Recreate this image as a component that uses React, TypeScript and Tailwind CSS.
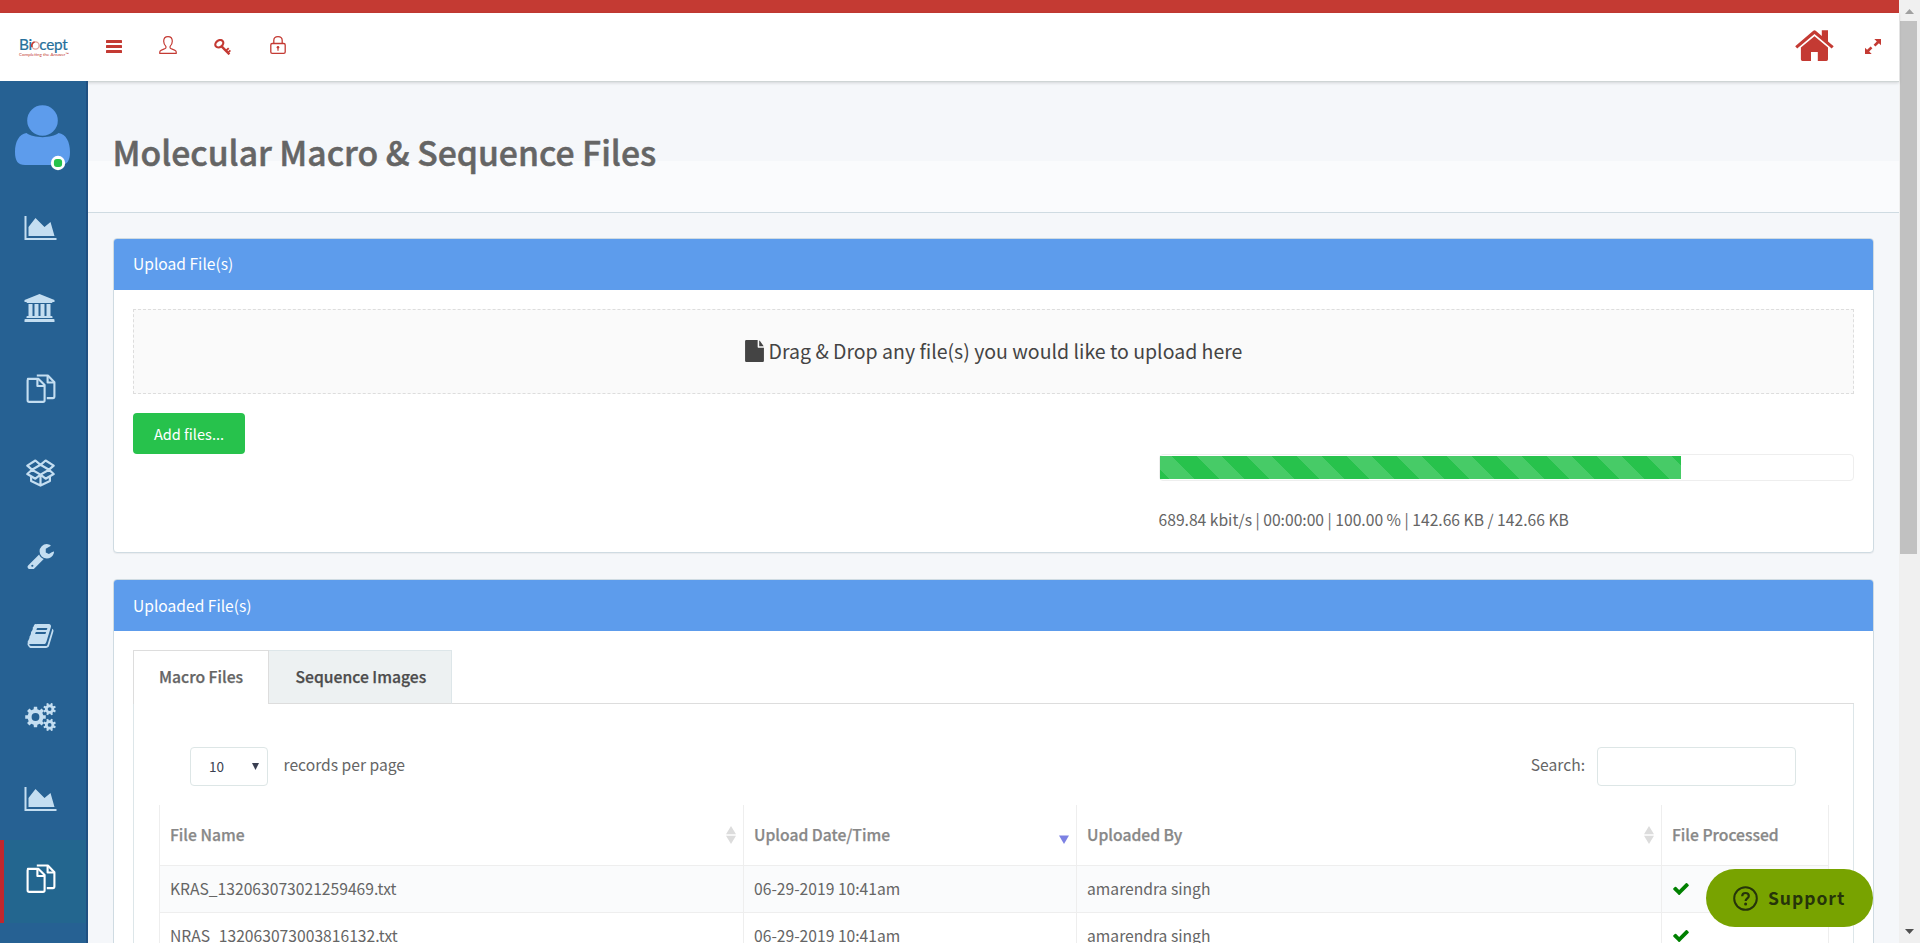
import React from "react";

type IconProps = { className?: string };

function gear(cx: number, cy: number, outer: number, inner: number, teeth: number, offset: number) {
  const pts: string[] = [];
  const step = (Math.PI * 2) / teeth;
  for (let i = 0; i < teeth; i++) {
    const a = offset + i * step;
    const corners: [number, number][] = [
      [inner, -0.3],
      [outer, -0.2],
      [outer, 0.2],
      [inner, 0.3],
    ];
    corners.forEach(([r, t]) => {
      pts.push(`${(cx + r * Math.cos(a + t * step)).toFixed(2)} ${(cy + r * Math.sin(a + t * step)).toFixed(2)}`);
    });
  }
  return `M${pts.join("L")}Z`;
}

function ring(cx: number, cy: number, r: number) {
  return `M${cx - r} ${cy}a${r} ${r} 0 1 0 ${r * 2} 0a${r} ${r} 0 1 0 ${-r * 2} 0Z`;
}

const AreaChart = ({ className }: IconProps) => (
  <svg viewBox="0 128 2048 1536" fill="currentColor" className={`h-6 w-[33px] ${className ?? ""}`}>
    <path d="M2048 1536v128h-2048v-1536h128v1408h1920zM1664 512l256 896h-1664v-576l448-576 576 576z" />
  </svg>
);

const University = () => (
  <svg viewBox="0 0 1920 1792" fill="currentColor" className="-mt-[2px] h-[28px] w-[31px]">
    <path d="M960 0l960 384v128h-128q0 26-20.500 45t-48.500 19h-1526q-28 0-48.500-19t-20.500-45h-128v-128zM256 640h256v768h128v-768h256v768h128v-768h256v768h128v-768h256v768h59q28 0 48.500 19t20.500 45v64h-1664v-64q0-26 20.500-45t48.500-19h59v-768zM1851 1600q28 0 48.500 19t20.500 45v128h-1920v-128q0-26 20.500-45t48.500-19h1782z" />
  </svg>
);

const Copy = () => (
  <svg viewBox="0 0 30 29" fill="none" stroke="currentColor" strokeWidth="2.100" strokeLinejoin="round" className="-mt-[4px] h-[29px] w-[30px]">
    <path d="M1.9 4.9H12.5L18.6 11V26.2Q18.6 27.9 17 27.9H3.2Q1.6 27.9 1.6 26.2V6.2Q1.6 4.9 3 4.9Z" />
    <path d="M11.400 5V12H18.400" />
    <path d="M10.8 1.5H21.9L28.4 8.2V22.6Q28.4 24.1 26.9 24.1H20.8" />
    <path d="M21.600 1.700V8.500H28.200" />
  </svg>
);

const OpenBox = () => (
  <svg viewBox="0 0 29 28" fill="none" stroke="currentColor" strokeWidth="2.200" strokeLinejoin="round" className="h-[28px] w-[29px]">
    <path d="M14.5 5.8L9.4 1.5L1.3 6.6L6 10.7L14.5 5.8L19.6 1.5L27.7 6.6L23 10.7Z" />
    <path d="M6 10.7L1.3 15L9.4 19.7L14.5 15.6L6 10.7ZM23 10.7L27.7 15L19.6 19.7L14.5 15.6Z" />
    <path d="M5.1 17.6V22L14.5 26.6L23.9 22V17.6M14.5 15.6V26.6" />
  </svg>
);

const Wrench = () => (
  <svg viewBox="54 64 1672 1600" fill="currentColor" className="h-[26px] w-[27px]">
    <path d="M448 1472q0-26-19-45t-45-19-45 19-19 45 19 45 45 19 45-19 19-45zm644-420l-682 682q-37 37-90 37-52 0-91-37l-106-108q-38-36-38-90 0-53 38-91l681-681q39 98 114.500 173.500t173.500 114.500zm634-435q0 39-23 106-47 134-164.500 217.500t-258.500 83.500q-185 0-316.500-131.500t-131.500-316.500 131.500-316.500 316.500-131.500q58 0 121.500 16.500t107.500 46.500q16 11 16 28t-16 28l-293 169v224l193 107q5-3 79-48.500t135.500-81 70.500-35.500q15 0 23.500 10t8.500 25z" />
  </svg>
);

const Book = () => (
  <svg viewBox="64 128 1664 1536" fill="currentColor" className="h-6 w-[27px]">
    <path d="M1703 478q40 57 18 129l-275 906q-19 64-76.500 107.500t-122.500 43.500h-923q-77 0-148.500-53.500t-99.500-131.500q-24-67-2-127 0-4 3-27t4-37q1-8-3-21.500t-3-19.500q2-11 8-21t16.500-23.500 16.500-23.500q23-38 45-91.500t30-91.500q3-10 .5-30t-.5-28q3-11 17-28t17-23q21-36 42-92t25-90q1-9-2.500-32t.5-28q4-13 22-30.500t22-22.500q19-26 42.500-84.500t27.500-96.500q1-8-3-25.500t-2-26.500q2-8 9-18t18-23 17-21q8-12 16.500-30.500t15-35 16-36 19.500-32 26.500-23.500 36-11.500 47.500 5.500l-1 3q38-9 51-9h761q74 0 114 56t18 130l-274 906q-36 119-71.500 153.500t-128.500 34.500h-869q-27 0-38 15-11 16-1 43 24 70 144 70h923q29 0 56-15.500t35-41.500l300-987q7-22 5-57 38 15 59 43zm-1064 2q-4 13 2 22.500t20 9.500h608q13 0 25.500-9.500t16.500-22.500l21-64q4-13-2-22.500t-20-9.500h-608q-13 0-25.500 9.500t-16.500 22.500zm-83 256q-4 13 2 22.500t20 9.500h608q13 0 25.500-9.500t16.500-22.500l21-64q4-13-2-22.500t-20-9.500h-608q-13 0-25.500 9.500t-16.500 22.500z" />
  </svg>
);

const Cogs = () => (
  <svg viewBox="0 0 31 28" fill="currentColor" fillRule="evenodd" className="h-[28px] w-[31px]">
    <path d={gear(10.5, 14, 10.4, 8, 8, 0) + ring(10.5, 14, 3.9)} />
    <path d={gear(24.6, 6.1, 6.4, 4.7, 8, 0.39) + ring(24.6, 6.1, 1.9)} />
    <path d={gear(24.6, 21.9, 6.4, 4.7, 8, 0.39) + ring(24.6, 21.9, 1.9)} />
  </svg>
);

const Check = () => (
  <svg viewBox="121 334 1550 1188" fill="#008000" className="ml-px h-[12px] w-4">
    <path d="M1671 566q0 40-28 68l-724 724-136 136q-28 28-68 28t-68-28l-136-136-362-362q-28-28-28-68t28-68l136-136q28-28 68-28t68 28l294 295 656-657q28-28 68-28t68 28l136 136q28 28 28 68z" />
  </svg>
);

const SortBoth = () => (
  <svg viewBox="0 0 10 18" fill="#dcdcdc" className="h-[18px] w-[10px]">
    <path d="M5 0L10 8.300H0ZM0 9.700H10L5 18Z" />
  </svg>
);

const SortDown = () => (
  <svg viewBox="0 0 10 18" fill="#7c81e3" className="h-[18px] w-[10px]">
    <path d="M0 9.500H10L5 18Z" />
  </svg>
);

const navItems = [
  { key: "charts", icon: <AreaChart />, pad: "pl-6" },
  { key: "institutions", icon: <University />, pad: "pl-6" },
  { key: "documents", icon: <Copy />, pad: "pl-[25.5px]" },
  { key: "inventory", icon: <OpenBox />, pad: "pl-[26px]" },
  { key: "tools", icon: <Wrench />, pad: "pl-[27px] pt-[3px]" },
  { key: "library", icon: <Book />, pad: "pl-[27px] pt-px" },
  { key: "settings", icon: <Cogs />, pad: "pl-[25px]" },
  { key: "reports", icon: <AreaChart />, pad: "pl-6" },
];

function TopBar() {
  return (
    <header className="relative z-10 flex h-[69px] shrink-0 border-b border-[#cfd5d5] bg-white text-[#c43a33] shadow-[0_1px_3px_rgba(0,0,0,0.14)]">
      <div className="flex w-[88px] flex-col items-start pt-[22px] pl-[19px]">
        <div className="flex h-[18px] items-center font-['Lato'] text-[15.3px] leading-[18px] tracking-[-0.3px] text-[#26709b] [-webkit-text-stroke:0.2px]">
          Bi
          <svg viewBox="0 0 10 10" className="-mr-[0.5px] -ml-px mt-[3px] h-[9px] w-[9px]" fill="none">
            <circle cx="5" cy="5" r="4" stroke="#e0a09c" strokeWidth="1.400" />
            <path d="M1.200 6.600A4 4 0 0 1 4 1.200" stroke="#c43a33" strokeWidth="1.800" />
          </svg>
          cept
        </div>
        <div className="-mt-px font-['Lato'] text-[4.5px] leading-[6px] whitespace-nowrap text-[#c43a33]">Completing the Answer™</div>
      </div>
      <div className="flex flex-1 items-start">
        <svg viewBox="0 0 16 13" fill="currentColor" className="mt-[27px] ml-[18px] h-[13px] w-4">
          <rect width="16" height="3" rx="0.600" />
          <rect y="5" width="16" height="3" rx="0.600" />
          <rect y="10" width="16" height="3" rx="0.600" />
        </svg>
        <svg viewBox="0 0 18 18" fill="none" stroke="currentColor" strokeWidth="1.200" className="mt-[23px] ml-[37px] h-[18px] w-[18px]" strokeLinejoin="round">
          <path d="M9 .7C6.200 .7 4.700 2.700 4.700 5.300C4.700 7.500 5.700 9.300 6.900 10.400V12C6.900 12.800 1.900 13.500 1.100 15.100C.8 15.800 .7 16.600 .7 17.300H17.300C17.300 16.600 17.200 15.800 16.900 15.100C16.100 13.500 11.100 12.800 11.100 12V10.400C12.300 9.300 13.300 7.500 13.300 5.300C13.300 2.700 11.800 .7 9 .7Z" />
        </svg>
        <svg viewBox="0 0 17 16" fill="none" stroke="currentColor" className="mt-[26px] ml-[37px] h-4 w-[17px]">
          <ellipse cx="5.300" cy="4.700" rx="4.300" ry="3.300" strokeWidth="2.200" transform="rotate(-38 5.300 4.700)" />
          <path d="M7.600 7.400L15.400 15.300" strokeWidth="2.400" />
          <path d="M12.300 11.500L14.700 9.100M14.300 13.300L16.400 11.300" strokeWidth="1.800" />
        </svg>
        <svg viewBox="0 0 16 18" fill="none" stroke="currentColor" strokeWidth="1.300" className="mt-[23px] ml-[39px] h-[18px] w-4">
          <rect x=".8" y="7.500" width="14.400" height="9.800" rx="1.400" />
          <path d="M3.800 7.400V4.600C3.800 2.200 5.500 .7 8 .7C10.500 .7 12.200 2.200 12.200 4.600V7.400" />
          <circle cx="8" cy="11.300" r="1.300" fill="currentColor" stroke="none" />
          <path d="M8 11.500V14.800" strokeWidth="1.200" />
        </svg>
      </div>
      <svg viewBox="0 0 39 31" fill="currentColor" className="mt-[17px] h-[31px] w-[39px]">
        <path d="M26.800 .3H33V11.600L38.700 16.300L36.700 18.500L19.500 3.900L2.200 18.500L.2 16.300L18.300 .7Q19.500 -.2 20.700 .7L26.800 5.900Z" />
        <path d="M19.500 6.300L33 17.600V29.300Q33 31 31.400 31H22.800V22H16V31H7.400Q5.900 31 5.900 29.300V17.600Z" />
      </svg>
      <svg viewBox="0 0 16 15" fill="currentColor" className="mt-[26px] mr-[18px] ml-[31px] h-[15px] w-4">
        <path d="M9.300 0H16V6.300L13.900 4.300L10.400 7.500L8.600 5.700L11.800 2.400Z" />
        <path d="M6.700 15H0V8.700L2.100 10.700L5.600 7.500L7.400 9.300L4.200 12.600Z" />
      </svg>
    </header>
  );
}

function Sidebar() {
  return (
    <aside className="relative z-20 flex w-[88px] shrink-0 flex-col border-r-2 border-[#205081] bg-[#266193] text-[#c4def1]">
      <div className="h-[106px] shrink-0 pt-[24px] pl-[15px]">
        <svg viewBox="0 0 56 66" className="h-[66px] w-[56px]">
          <circle cx="27.500" cy="15.500" r="15.300" fill="#5d9cec" />
          <path d="M11.500 28C18 33.500 37 33.500 43.500 28C51 29 55 37 55 47C55 56 52 60 45 60H10C3 60 0 56 0 47C0 37 4 29 11.500 28Z" fill="#5d9cec" />
          <circle cx="43" cy="58" r="7.200" fill="#fff" />
          <rect x="38.900" y="53.900" width="8.200" height="8.200" rx="3" fill="#27c24c" />
        </svg>
      </div>
      <nav className="flex flex-col">
        {navItems.map((item) => (
          <div key={item.key} className={`flex h-[81.6px] items-center ${item.pad}`}>
            {item.icon}
          </div>
        ))}
        <div className="flex h-[83px] items-center border-l-4 border-[#c1272d] bg-[#23668f] pb-[2px] pl-[21.5px] text-white">
          <Copy />
        </div>
      </nav>
    </aside>
  );
}

function UploadPanel() {
  return (
    <section className="h-[315px] overflow-hidden rounded-[4px] border border-[#cfdbe2] bg-white shadow-[0_1px_1px_rgba(0,0,0,0.05)]">
      <h2 className="h-[51px] bg-[#5d9cec] pl-[19px] text-[15.6px] leading-[49px] text-white">Upload File(s)</h2>
      <div className="px-[19px] pt-[19px]">
        <div className="flex h-[85px] items-center justify-center border border-dashed border-[#dddddd] bg-[#fafafa] pb-[2px] text-[#444]">
          <svg viewBox="0 0 1536 1792" fill="currentColor" className="mr-[5px] h-[22px] w-[19px]">
            <path d="M1024 0H96Q0 0 0 96V1696Q0 1792 96 1792H1440Q1536 1792 1536 1696V640H1120Q1024 640 1024 544ZM1152 40V512H1508Q1490 470 1460 436L1230 100Q1190 60 1152 40Z" />
          </svg>
          <span className="text-[19.5px] leading-6">Drag &amp; Drop any file(s) you would like to upload here</span>
        </div>
        <button className="mt-[19px] block h-[41px] w-[112px] rounded-[4px] bg-[#27c24c] text-[14.6px] leading-[41px] text-white">Add files...</button>
        <div className="ml-auto w-[695px]">
          <div className="flex h-[27px] rounded-[4px] border border-[#eeeeee] py-px">
            <div className="h-[23px] w-[521px] bg-[#27c24c] bg-[linear-gradient(45deg,rgba(255,255,255,0.15)_25%,transparent_25%,transparent_50%,rgba(255,255,255,0.15)_50%,rgba(255,255,255,0.15)_75%,transparent_75%,transparent)] bg-[length:50px_50px] bg-[position:0px_13px]" />
          </div>
          <p className="mt-[26px] -ml-[0.5px] text-[15.67px] leading-[26px] whitespace-nowrap">689.84 kbit/s | 00:00:00 | 100.00 % | 142.66 KB / 142.66 KB</p>
        </div>
      </div>
    </section>
  );
}

const rows = [
  { file: "KRAS_132063073021259469.txt", date: "06-29-2019 10:41am", user: "amarendra singh" },
  { file: "NRAS_132063073003816132.txt", date: "06-29-2019 10:41am", user: "amarendra singh" },
];

function FilesTable() {
  const th = "relative h-[60px] border-x border-[#eeeeee] p-0 pl-[10px] text-left font-medium [-webkit-text-stroke:0.25px]";
  const td = "border border-[#eeeeee] p-0 pl-[10px]";
  return (
    <table className="mt-[19px] ml-[25px] w-[1669px] table-fixed border-collapse text-[15.67px]">
      <colgroup>
        <col className="w-[584px]" />
        <col className="w-[333px]" />
        <col className="w-[585px]" />
        <col className="w-[167px]" />
      </colgroup>
      <thead className="text-[#888888]">
        <tr>
          <th className={th}>
            <div className="flex items-center justify-between pr-[7px]">File Name<SortBoth /></div>
          </th>
          <th className={th}>
            <div className="flex items-center justify-between pr-[7px]">Upload Date/Time<SortDown /></div>
          </th>
          <th className={th}>
            <div className="flex items-center justify-between pr-[7px]">Uploaded By<SortBoth /></div>
          </th>
          <th className={th}>File Processed</th>
        </tr>
      </thead>
      <tbody>
        {rows.map((r) => (
          <tr key={r.file} className="h-[47px] odd:bg-[#fafbfc]">
            <td className={td}>{r.file}</td>
            <td className={td}>{r.date}</td>
            <td className={td}>{r.user}</td>
            <td className={td}><Check /></td>
          </tr>
        ))}
      </tbody>
    </table>
  );
}

function FilesPanel() {
  return (
    <section className="mt-[26px] h-[420px] shrink-0 rounded-[4px] border border-[#cfdbe2] bg-white">
      <h2 className="h-[51px] rounded-t-[3px] bg-[#5d9cec] pl-[19px] text-[15.6px] leading-[51px] text-white">Uploaded File(s)</h2>
      <div className="px-[19px] pt-[19px]">
        <div className="flex h-[54px] text-[15.7px] leading-[52px] font-medium [-webkit-text-stroke:0.25px]">
          <div className="w-[136px] border-t border-r border-l border-[#dddddd] pl-[25px]">Macro Files</div>
          <div className="w-[183px] border-t border-r border-b border-[#dde6e9] border-b-[#dddddd] bg-[#edf1f2] pl-[26.5px] text-[#4c4c4c]">Sequence Images</div>
          <div className="flex-1 border-b border-[#dddddd]" />
        </div>
        <div className="h-[300px] border-x border-[#dde6e9]">
          <div className="flex items-start pt-[43px] pr-[57px] pl-[56px] text-[15.65px] leading-[35px]">
            <div className="flex h-[39px] w-[78px] items-center justify-between rounded-[4px] border border-[#dde6e6] pr-[8px] pl-[18px] text-[13.5px] leading-none text-[#3a3f51]">
              <span className="pt-px">10</span>
              <svg viewBox="0 0 7 7" fill="#3a3f51" className="h-[7px] w-[7px]">
                <path d="M0 0H7L3.500 7Z" />
              </svg>
            </div>
            <span className="ml-[15.5px]">records per page</span>
            <span className="mr-[12px] ml-auto">Search:</span>
            <div className="h-[39px] w-[199px] rounded-[4px] border border-[#dde6e6]" />
          </div>
          <FilesTable />
        </div>
      </div>
    </section>
  );
}

function ScrollBar() {
  return (
    <div className="flex w-[21px] shrink-0 flex-col items-center bg-[#f0f0f0]">
      <svg viewBox="0 0 9 5" fill="#a0a0a0" className="mt-[9px] h-[5px] w-[9px]">
        <path d="M0 5L4.500 0L9 5Z" />
      </svg>
      <div className="mt-[7px] mr-[2px] h-[533px] w-[17px] bg-[#c1c1c1]" />
      <svg viewBox="0 0 9 5" fill="#505050" className="mt-auto mb-[9px] h-[5px] w-[9px]">
        <path d="M0 0L4.500 5L9 0Z" />
      </svg>
    </div>
  );
}

export default function App() {
  return (
    <div className="relative flex h-[943px] w-[1920px] overflow-hidden font-['Noto_Sans_CJK_SC','Noto_Sans',sans-serif] text-[#656565]">
      <div className="flex min-w-0 flex-1 flex-col">
        <div className="h-[13px] shrink-0 bg-[#c43a33]" />
        <TopBar />
        <div className="-mt-px flex min-h-0 flex-1">
          <Sidebar />
          <main className="flex min-w-0 flex-1 flex-col bg-[#f5f7fa]">
            <div className="h-[132px] shrink-0 border-b border-[#cfdbe2] bg-[linear-gradient(#f5f7fa_80px,#fafbfd_80px)] pt-[47px] pl-[24.5px]">
              <h1 className="text-[33.7px] leading-[48px] font-medium [-webkit-text-stroke:0.5px]">Molecular Macro &amp; Sequence Files</h1>
            </div>
            <div className="flex flex-col px-[25px] pt-[25px]">
              <UploadPanel />
              <FilesPanel />
            </div>
          </main>
        </div>
      </div>
      <ScrollBar />
      <button className="absolute top-[869px] left-[1706px] flex h-[58px] w-[167px] items-center rounded-full bg-[#78a300] pl-[27px] text-[#26340a]">
        <svg viewBox="0 0 25 25" fill="none" stroke="currentColor" strokeWidth="2" className="h-[25px] w-[25px]">
          <circle cx="12.500" cy="12.500" r="11.300" />
          <path d="M9.200 10.200C9.200 8.200 10.500 7 12.500 7C14.500 7 15.800 8.200 15.800 9.900C15.800 12.300 12.600 12.300 12.600 15" strokeWidth="2.200" />
          <circle cx="12.600" cy="18" r="1.500" fill="currentColor" stroke="none" />
        </svg>
        <span className="ml-[10px] text-[17.5px] leading-6 font-bold tracking-[0.95px]">Support</span>
      </button>
    </div>
  );
}
